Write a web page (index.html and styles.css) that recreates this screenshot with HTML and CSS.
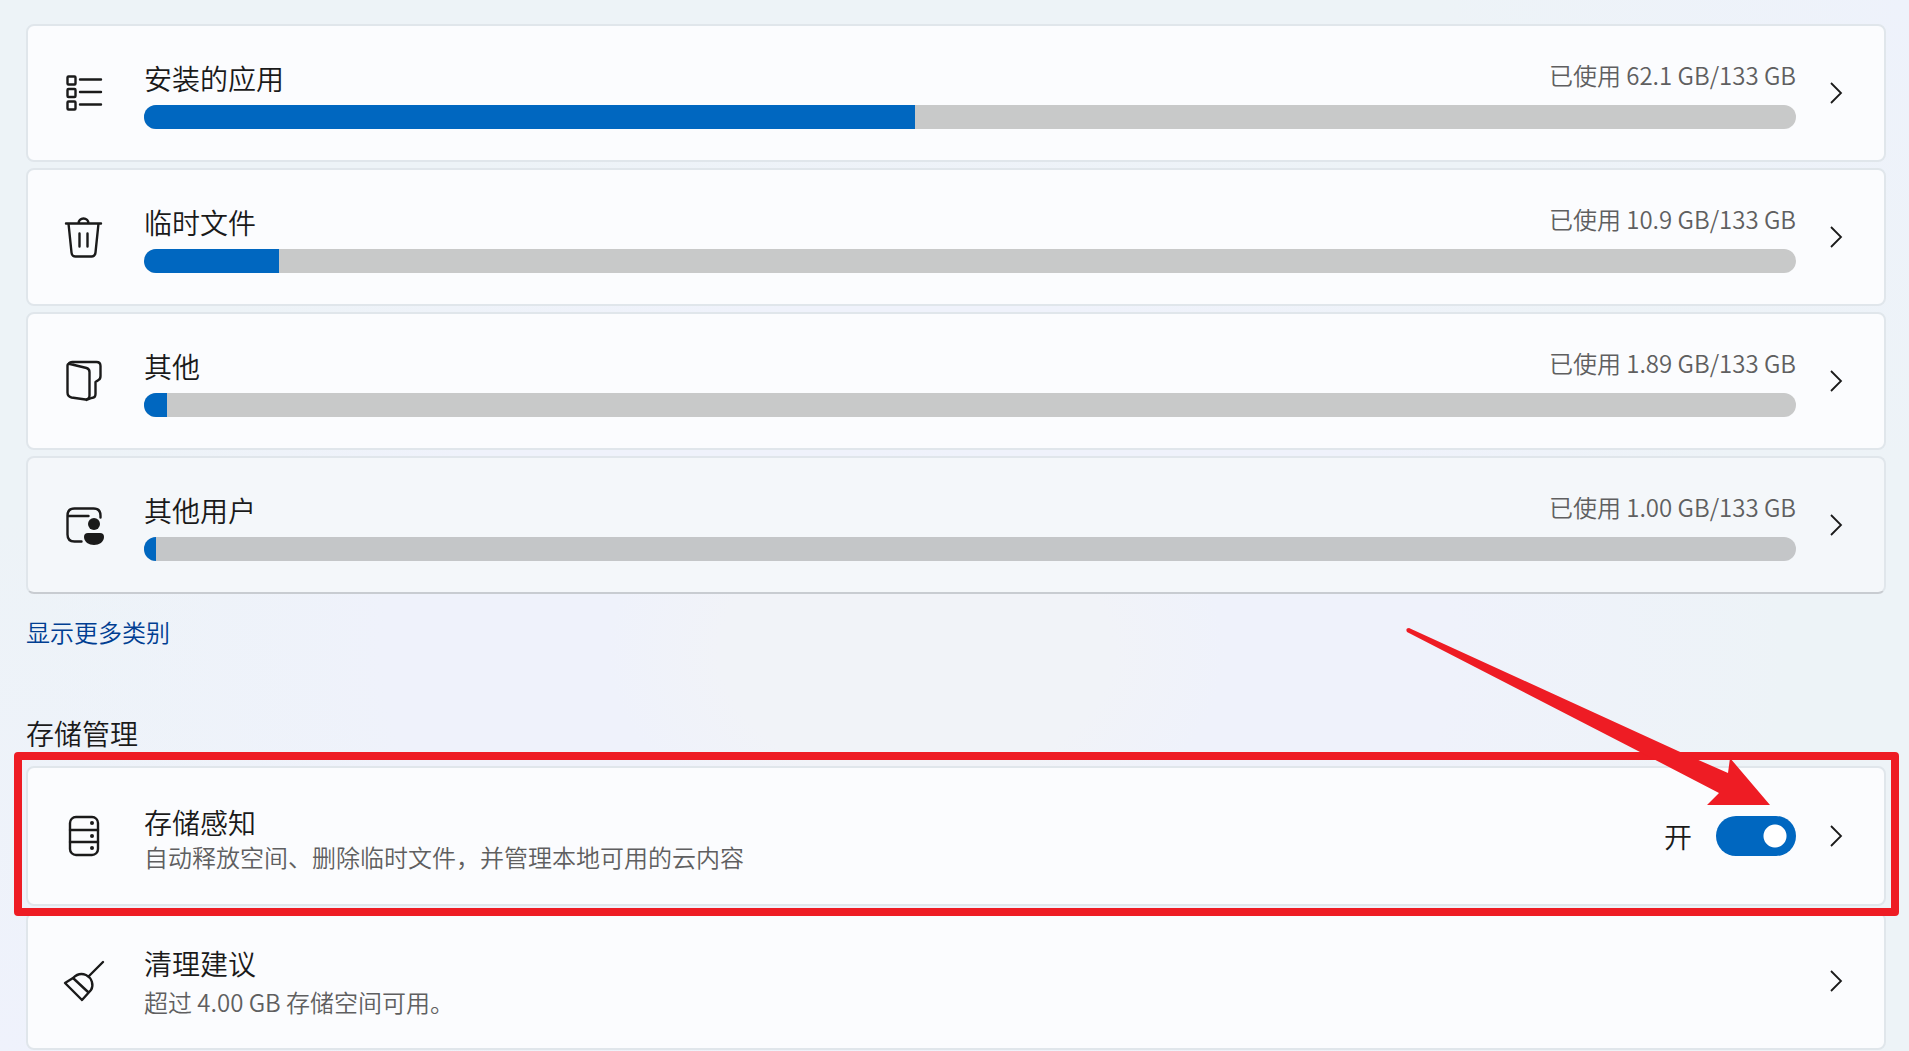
FILE: index.html
```html
<!DOCTYPE html>
<html lang="zh-CN">
<head>
    <meta charset="UTF-8">
    <meta name="viewport" content="width=device-width, initial-scale=1.0">
    <title>存储</title>
    <link rel="stylesheet" href="styles.css">
</head>
<body>
<main class="page">
    <section class="cards">
        <a class="card" href="#apps">
            <svg class="icon" viewBox="0 0 40 40" aria-hidden="true">
                <rect x="3.500" y="3.500" width="8" height="8" rx="1"/>
                <rect x="3.500" y="16" width="8" height="8" rx="1"/>
                <rect x="3.500" y="28.500" width="8" height="8" rx="1"/>
                <path d="M16 6.500h21M16 19h21M16 31.500h21"/>
            </svg>
            <div class="usage">
                <div class="usage-head">
                    <label class="title" for="apps">安装的应用</label>
                    <span class="amount">已使用 62.1 GB/133 GB</span>
                </div>
                <progress class="bar" id="apps" value="62.1" max="133"></progress>
            </div>
            <svg class="chevron" viewBox="0 0 16 24" aria-hidden="true"><path d="M3 2l10 10L3 22"/></svg>
        </a>

        <a class="card" href="#temp">
            <svg class="icon" viewBox="0 0 40 40" aria-hidden="true">
                <path d="M2 6.500h35M14.500 6.500a5 5 0 0 1 10 0M4.500 6.500l3 29q.5 4 4 4h16q3.500 0 4-4l3-29M15.500 16.500v13M23.500 16.500v13"/>
            </svg>
            <div class="usage">
                <div class="usage-head">
                    <label class="title" for="temp">临时文件</label>
                    <span class="amount">已使用 10.9 GB/133 GB</span>
                </div>
                <progress class="bar" id="temp" value="10.9" max="133"></progress>
            </div>
            <svg class="chevron" viewBox="0 0 16 24" aria-hidden="true"><path d="M3 2l10 10L3 22"/></svg>
        </a>

        <a class="card" href="#other">
            <svg class="icon" viewBox="0 0 40 40" aria-hidden="true">
                <path d="M3.500 4.500v27q0 4 4 5l14 2q4 0 4-4V11q0-3-3-4L6 3Q3.500 2.500 3.500 4.500zM4.500 3Q5.500 1 8.500 1h24q4 0 4 4v10q0 3-2 4l-3 2v12q0 4-4 4l-5 2"/>
            </svg>
            <div class="usage">
                <div class="usage-head">
                    <label class="title" for="other">其他</label>
                    <span class="amount">已使用 1.89 GB/133 GB</span>
                </div>
                <progress class="bar" id="other" value="1.89" max="133"></progress>
            </div>
            <svg class="chevron" viewBox="0 0 16 24" aria-hidden="true"><path d="M3 2l10 10L3 22"/></svg>
        </a>

        <a class="card card-hover" href="#users">
            <svg class="icon" viewBox="0 0 40 40" aria-hidden="true">
                <path d="M17.500 36.500h-7q-7 0-7-7v-19q0-7 7-7h19q7 0 7 7v2M3.500 11h21"/>
                <circle class="solid" cx="30" cy="19" r="6"/>
                <path class="solid" d="M24 28h12q4 0 4 4c0 5-5 8-10 8s-10-3-10-8q0-4 4-4z"/>
            </svg>
            <div class="usage">
                <div class="usage-head">
                    <label class="title" for="users">其他用户</label>
                    <span class="amount">已使用 1.00 GB/133 GB</span>
                </div>
                <progress class="bar" id="users" value="1" max="133"></progress>
            </div>
            <svg class="chevron" viewBox="0 0 16 24" aria-hidden="true"><path d="M3 2l10 10L3 22"/></svg>
        </a>
    </section>

    <a class="more" href="#more">显示更多类别</a>

    <h2 class="heading">存储管理</h2>
    <section class="cards">
        <div class="card card-sense">
            <svg class="icon" viewBox="0 0 40 40" aria-hidden="true">
                <rect x="6" y="1" width="28" height="38" rx="6"/>
                <path d="M6 14h28M6 26h28"/>
                <circle class="solid" cx="28" cy="7" r="2"/>
                <circle class="solid" cx="28" cy="20" r="2"/>
                <circle class="solid" cx="28" cy="32" r="2"/>
            </svg>
            <div class="info">
                <span class="title">存储感知</span>
                <span class="desc">自动释放空间、删除临时文件，并管理本地可用的云内容</span>
            </div>
            <label class="switch">
                <span class="title">开</span>
                <input class="toggle" type="checkbox" role="switch" checked>
            </label>
            <a class="open" href="#sense" aria-label="存储感知">
                <svg class="chevron" viewBox="0 0 16 24" aria-hidden="true"><path d="M3 2l10 10L3 22"/></svg>
            </a>
            <div class="highlight"></div>
            <svg class="arrow" viewBox="0 0 366 182" aria-hidden="true">
                <path d="M4 2L273 125l50 22 2-15 40 47h-63l12-12-79-41L2 6Q0 2 4 2z"/>
            </svg>
        </div>

        <a class="card" href="#cleanup">
            <svg class="icon" viewBox="0 0 40 40" aria-hidden="true">
                <path d="M39 1L25 15M1 22l8-5q6-6 13-3c6 3 8 10 5 15l-9 10zM9 17l15 14"/>
            </svg>
            <div class="info">
                <span class="title">清理建议</span>
                <span class="desc">超过 4.00 GB 存储空间可用。</span>
            </div>
            <svg class="chevron" viewBox="0 0 16 24" aria-hidden="true"><path d="M3 2l10 10L3 22"/></svg>
        </a>
    </section>
</main>
</body>
</html>
```
FILE: styles.css
```css
* {
    box-sizing: border-box;
}
body {
    margin: 0;
    font-family: "Noto Sans CJK SC", sans-serif;
    font-weight: 350;
    color: #1a1a1a;
    background:
        radial-gradient(circle at 100% 0, #eef2fb, transparent 22%),
        radial-gradient(circle at 0 100%, #eff2fc, transparent 25%),
        radial-gradient(ellipse at 48% 62%, #f1f3f8 0%, #f1f3f8 14%, #eff2fb 22%, #eff2fb 38%, #edf3f7 62%);
}
.page {
    padding: 24px 23px 1px 26px;
}
.cards {
    display: flex;
    flex-direction: column;
    gap: 6px;
}
.card {
    position: relative;
    display: flex;
    align-items: center;
    min-height: 138px;
    padding: 0 40px 0 36px;
    border: 2px solid #e0e6eb;
    border-radius: 8px;
    background: #fbfcfe;
    color: inherit;
    text-decoration: none;
}
.card-hover {
    background: #f4f7fa;
    border-bottom-color: #c8ccd1;
}
.card-sense {
    min-height: 140px;
}
.icon {
    flex: none;
    width: 40px;
    height: 40px;
    margin-right: 40px;
    overflow: visible;
    fill: none;
    stroke: #1a1a1a;
    stroke-width: 2.4;
    stroke-linecap: round;
    stroke-linejoin: round;
}
.solid {
    fill: #1a1a1a;
    stroke: none;
}
.chevron {
    display: block;
    flex: none;
    width: 16px;
    height: 24px;
    margin-left: 32px;
    fill: none;
    stroke: #1a1a1a;
    stroke-width: 1.8;
}

/* usage bars */
.usage {
    flex: 1;
    display: flex;
    flex-direction: column;
    gap: 6px;
}
.usage-head {
    display: flex;
    align-items: flex-start;
    justify-content: space-between;
}
.title {
    font-size: 28px;
    line-height: 42px;
}
.amount, .desc {
    font-size: 24px;
    line-height: 36px;
    color: #5f5f60;
}
.bar {
    display: block;
    width: 100%;
    height: 24px;
    border: none;
    border-radius: 12px;
    overflow: hidden;
    appearance: none;
    background: #c8c9c9;
}
.bar::-webkit-progress-bar {
    background: transparent;
}
.bar::-webkit-progress-value {
    background: #0067c0;
}
.card-hover .bar {
    background: #c4c6c8;
}

.more {
    display: block;
    width: fit-content;
    margin-top: 20px;
    font-size: 24px;
    line-height: 36px;
    color: #003e92;
    text-decoration: none;
}
.heading {
    margin: 62px 0 12px;
    font-size: 28px;
    font-weight: 350;
    line-height: 42px;
}

/* storage management */
.info {
    flex: 1;
    display: flex;
    flex-direction: column;
}
.card-sense .info {
    padding-top: 8px;
}
.card-sense .info .title {
    line-height: 34px;
}
.switch {
    display: flex;
    align-items: center;
    gap: 24px;
}
.toggle {
    width: 80px;
    height: 40px;
    margin: 0;
    border-radius: 20px;
    appearance: none;
    background: radial-gradient(circle at 59px 20px, #fff 11px, transparent 12px) #0067c0;
}
.highlight {
    position: absolute;
    inset: -16px -15px -12px -14px;
    z-index: 1;
    border: 8px solid #ee1c24;
    border-radius: 4px;
    pointer-events: none;
}
.arrow {
    position: absolute;
    top: -142px;
    right: 113px;
    z-index: 2;
    width: 366px;
    height: 182px;
    fill: #ee1c24;
    pointer-events: none;
}
```
